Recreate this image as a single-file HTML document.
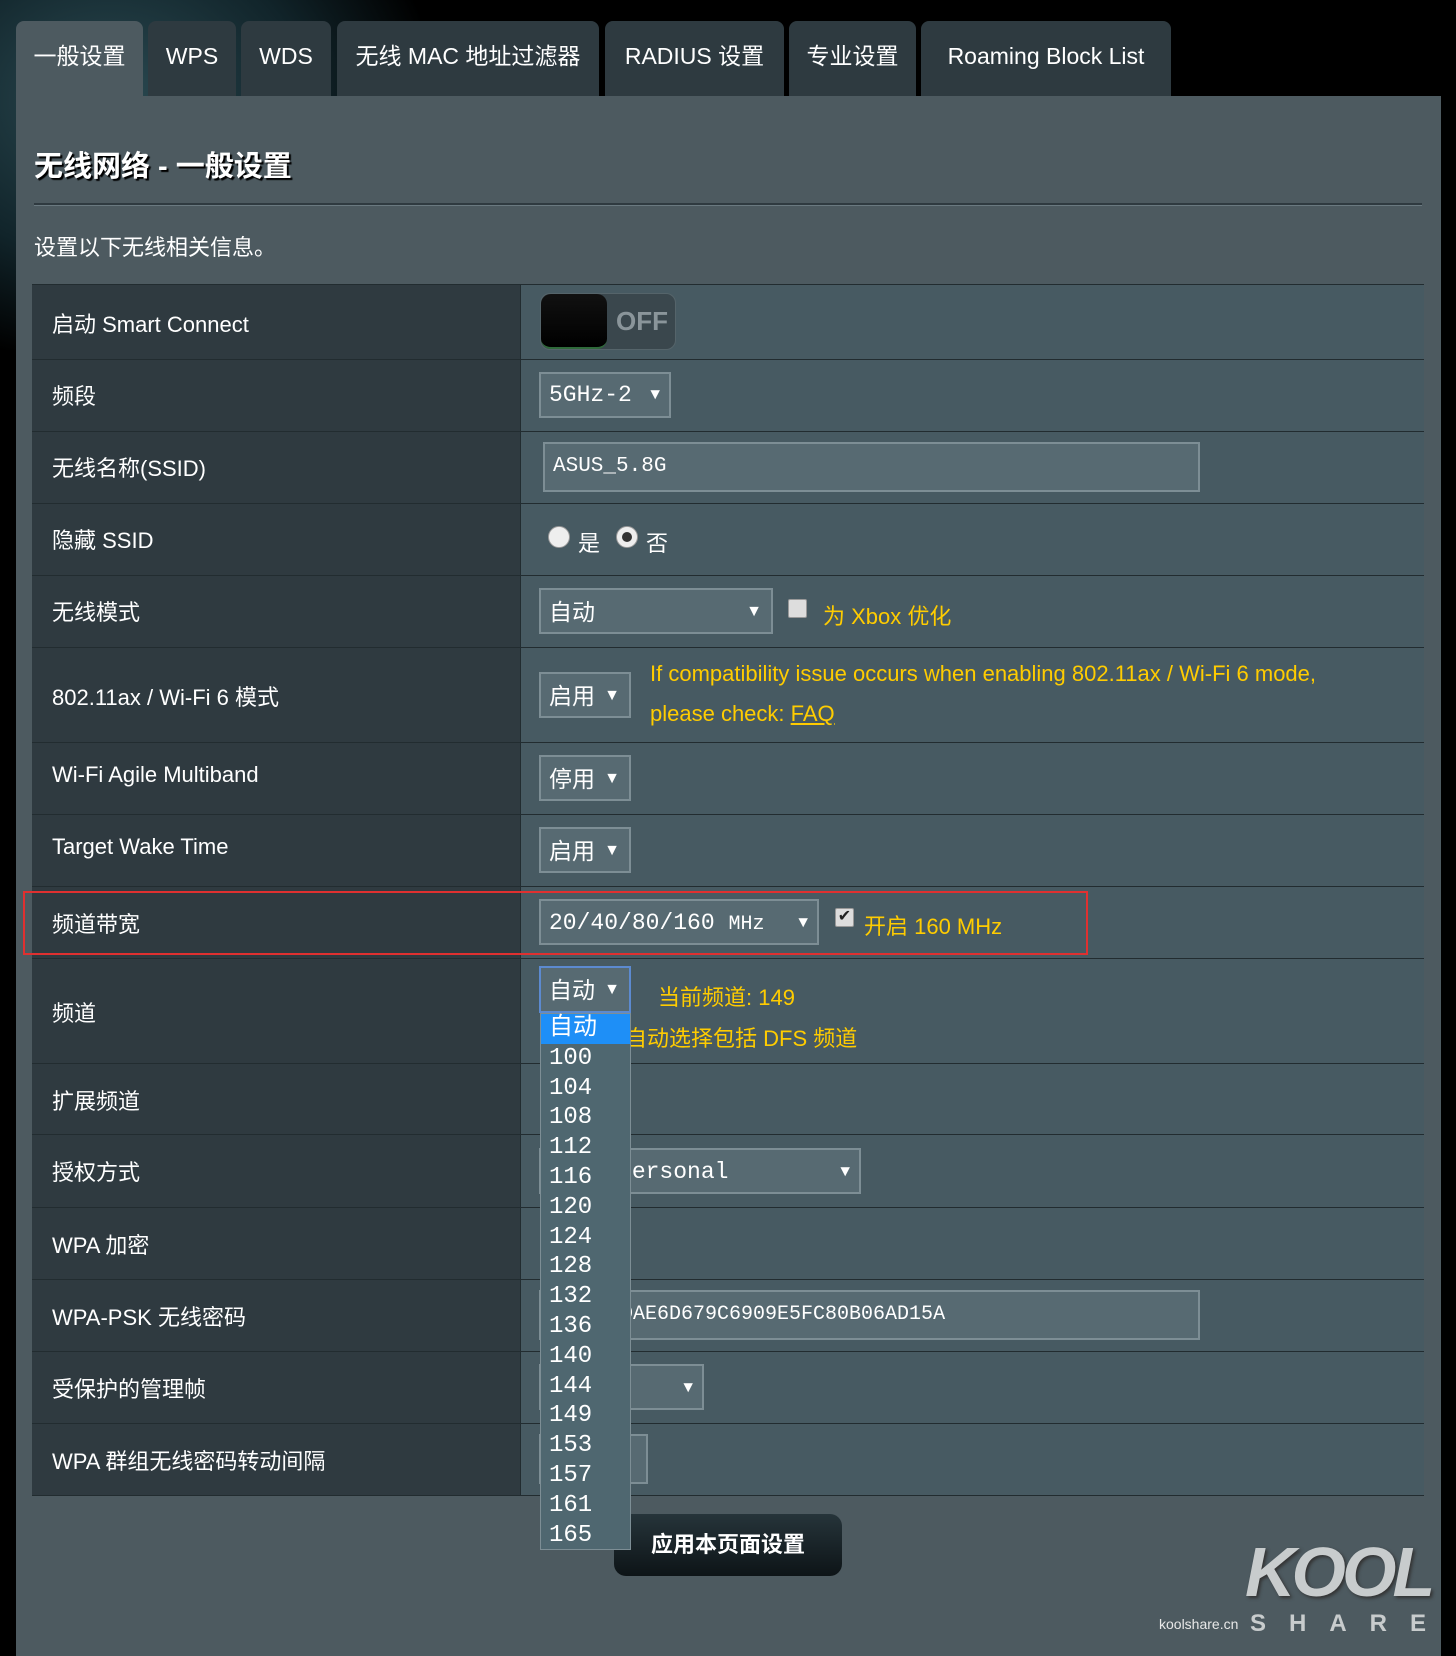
<!DOCTYPE html>
<html><head><meta charset="utf-8">
<style>
*{box-sizing:border-box;margin:0;padding:0}
body{width:1456px;height:1647px;background:#000;position:relative;overflow:hidden;font-family:"Liberation Sans","Noto Sans CJK SC",sans-serif;color:#fff}
.glow{position:absolute;left:-200px;top:-150px;width:620px;height:500px;background:radial-gradient(ellipse at center,#2b4a52 0%,#11242a 45%,#000 75%)}
.a{position:absolute}
.tab{position:absolute;top:21px;height:75px;background:#2e3a40;border-radius:8px 8px 0 0;font-size:23px;line-height:70px;text-align:center;color:#fff}
.panel{position:absolute;left:16px;top:96px;width:1425px;height:1560px;background:#4d5a60}
.row{position:absolute;left:32px;width:1392px;border-top:1px solid #222c30}
.lc{position:absolute;left:0;top:0;bottom:0;width:488px;background:#2f3a40}
.rc{position:absolute;left:488px;right:0;top:0;bottom:0;background:#475a62;border-left:1px solid #222c30}
.lbl{position:absolute;left:20px;font-size:22px;color:#fff}
.sel{position:absolute;background:#576a72;border:2px solid #7d8e95;font-family:"Liberation Mono","Noto Sans CJK SC",monospace;font-size:23px;color:#fff;padding-left:8px}
.sel .ar{position:absolute;right:9px;font-size:16px}
.y{position:absolute;color:#ffcc00;font-size:22px}
.cb{position:absolute;width:19px;height:19px;background:#ddd;border:1px solid #999;border-radius:2px}
.list{position:absolute;left:540px;top:1013px;width:91px;height:537px;background:#4f6770;border:1px solid #7d8e95;font-family:"Liberation Mono","Noto Sans CJK SC",monospace;font-size:24px;color:#fff}
.list div{height:29.8px;line-height:29.8px;padding-left:8px}
</style></head><body>
<div class="glow"></div>
<div class="tab" style="left:16px;width:127px;background:#4d5a60">一般设置</div>
<div class="tab" style="left:148px;width:88px">WPS</div>
<div class="tab" style="left:241px;width:90px">WDS</div>
<div class="tab" style="left:337px;width:262px">无线 MAC 地址过滤器</div>
<div class="tab" style="left:605px;width:179px">RADIUS 设置</div>
<div class="tab" style="left:789px;width:127px">专业设置</div>
<div class="tab" style="left:921px;width:250px">Roaming Block List</div>
<div class="panel"></div>
<div class="a" style="left:34px;top:143px;font-size:29px;font-weight:bold;text-shadow:2px 2px 1px #000">无线网络 - 一般设置</div>
<div class="a" style="left:34px;top:203px;width:1388px;height:3px;background:#2f3a40;border-bottom:1px solid #6a7980"></div>
<div class="a" style="left:34px;top:230px;font-size:22px">设置以下无线相关信息。</div>

<div class="row" style="top:284px;height:75px"><div class="lc"></div><div class="rc"></div><div class="lbl" style="top:22px">启动 Smart Connect</div></div>
<div class="row" style="top:359px;height:72px"><div class="lc"></div><div class="rc"></div><div class="lbl" style="top:19px">频段</div></div>
<div class="row" style="top:431px;height:72px"><div class="lc"></div><div class="rc"></div><div class="lbl" style="top:19px">无线名称(SSID)</div></div>
<div class="row" style="top:503px;height:72px"><div class="lc"></div><div class="rc"></div><div class="lbl" style="top:19px">隐藏 SSID</div></div>
<div class="row" style="top:575px;height:72px"><div class="lc"></div><div class="rc"></div><div class="lbl" style="top:19px">无线模式</div></div>
<div class="row" style="top:647px;height:95px"><div class="lc"></div><div class="rc"></div><div class="lbl" style="top:32px">802.11ax / Wi-Fi 6 模式</div></div>
<div class="row" style="top:742px;height:72px"><div class="lc"></div><div class="rc"></div><div class="lbl" style="top:19px">Wi-Fi Agile Multiband</div></div>
<div class="row" style="top:814px;height:72px"><div class="lc"></div><div class="rc"></div><div class="lbl" style="top:19px">Target Wake Time</div></div>
<div class="row" style="top:886px;height:72px"><div class="lc"></div><div class="rc"></div><div class="lbl" style="top:20px">频道带宽</div></div>
<div class="row" style="top:958px;height:105px"><div class="lc"></div><div class="rc"></div><div class="lbl" style="top:37px">频道</div></div>
<div class="row" style="top:1063px;height:71px"><div class="lc"></div><div class="rc"></div><div class="lbl" style="top:20px">扩展频道</div></div>
<div class="row" style="top:1134px;height:73px"><div class="lc"></div><div class="rc"></div><div class="lbl" style="top:20px">授权方式</div></div>
<div class="row" style="top:1207px;height:72px"><div class="lc"></div><div class="rc"></div><div class="lbl" style="top:20px">WPA 加密</div></div>
<div class="row" style="top:1279px;height:72px"><div class="lc"></div><div class="rc"></div><div class="lbl" style="top:20px">WPA-PSK 无线密码</div></div>
<div class="row" style="top:1351px;height:72px"><div class="lc"></div><div class="rc"></div><div class="lbl" style="top:20px">受保护的管理帧</div></div>
<div class="row" style="top:1423px;height:73px;border-bottom:1px solid #222c30"><div class="lc"></div><div class="rc"></div><div class="lbl" style="top:20px">WPA 群组无线密码转动间隔</div></div>

<!-- toggle -->
<div class="a" style="left:540px;top:293px;width:136px;height:57px;border-radius:10px;background:#3a474d;border:1px solid #55646a"></div>
<div class="a" style="left:541px;top:294px;width:66px;height:55px;border-radius:10px;background:linear-gradient(#111,#000);border-bottom:2px solid #2f6a3a"></div>
<div class="a" style="left:616px;top:306px;font-size:26px;font-weight:bold;color:#8a959a">OFF</div>

<div class="sel" style="left:539px;top:372px;width:132px;height:46px;line-height:42px">5GHz-2<span class="ar">▼</span></div>
<div class="sel" style="left:543px;top:442px;width:657px;height:50px;line-height:46px;font-size:21px">ASUS_5.8G</div>

<div class="a" style="left:548px;top:526px;width:22px;height:22px;border-radius:50%;background:#eee;border:1px solid #999"></div>
<div class="a" style="left:578px;top:526px;font-size:22px">是</div>
<div class="a" style="left:616px;top:526px;width:22px;height:22px;border-radius:50%;background:#eee;border:1px solid #999"><div style="margin:5px;width:10px;height:10px;border-radius:50%;background:#333"></div></div>
<div class="a" style="left:646px;top:526px;font-size:22px">否</div>

<div class="sel" style="left:539px;top:588px;width:234px;height:46px;line-height:44px;font-family:'Liberation Sans','Noto Sans CJK SC',sans-serif">自动<span class="ar">▼</span></div>
<div class="cb" style="left:788px;top:599px"></div>
<div class="y" style="left:823px;top:599px">为 Xbox 优化</div>

<div class="sel" style="left:539px;top:672px;width:92px;height:46px;line-height:44px;font-family:'Liberation Sans','Noto Sans CJK SC',sans-serif">启用<span class="ar">▼</span></div>
<div class="y" style="left:650px;top:661px">If compatibility issue occurs when enabling 802.11ax / Wi-Fi 6 mode,</div>
<div class="y" style="left:650px;top:701px">please check: <u>FAQ</u></div>

<div class="sel" style="left:539px;top:755px;width:92px;height:46px;line-height:44px;font-family:'Liberation Sans','Noto Sans CJK SC',sans-serif">停用<span class="ar">▼</span></div>
<div class="sel" style="left:539px;top:827px;width:92px;height:46px;line-height:44px;font-family:'Liberation Sans','Noto Sans CJK SC',sans-serif">启用<span class="ar">▼</span></div>

<div class="sel" style="left:539px;top:899px;width:280px;height:46px;line-height:44px">20/40/80/160 <span style="font-size:20px">MHz</span><span class="ar">▼</span></div>
<div class="cb" style="left:835px;top:908px;font-size:16px;line-height:16px;color:#222;text-align:center">✔</div>
<div class="y" style="left:864px;top:909px">开启 160 MHz</div>
<div class="a" style="left:23px;top:891px;width:1065px;height:64px;border:2px solid #e03030"></div>

<div class="sel" style="left:539px;top:966px;width:92px;height:47px;line-height:44px;border-color:#5c8ad0;font-family:'Liberation Sans','Noto Sans CJK SC',sans-serif">自动<span class="ar">▼</span></div>
<div class="y" style="left:658px;top:980px">当前频道: 149</div>
<div class="y" style="left:625px;top:1021px">自动选择包括 DFS 频道</div>

<div class="sel" style="left:539px;top:1148px;width:322px;height:46px;line-height:44px">WPA2-Personal<span class="ar">▼</span></div>
<div class="sel" style="left:539px;top:1290px;width:661px;height:50px;line-height:46px;font-size:20px">C8A1B0DAE6D679C6909E5FC80B06AD15A</div>
<div class="sel" style="left:539px;top:1364px;width:165px;height:46px;line-height:44px"><span class="ar">▼</span></div>
<div class="sel" style="left:539px;top:1434px;width:109px;height:50px"></div>

<div class="a" style="left:614px;top:1514px;width:228px;height:62px;border-radius:12px;background:linear-gradient(#26343a,#0d1417);font-size:22px;font-weight:bold;text-align:center;line-height:62px">应用本页面设置</div>

<div class="list">
<div style="background:#1e8ff7">自动</div><div>100</div><div>104</div><div>108</div><div>112</div><div>116</div><div>120</div><div>124</div><div>128</div><div>132</div><div>136</div><div>140</div><div>144</div><div>149</div><div>153</div><div>157</div><div>161</div><div>165</div>
</div>

<div class="a" style="left:1245px;top:1532px;font-size:70px;font-weight:bold;color:#c8cccd;letter-spacing:-4px;font-style:italic;text-shadow:2px 2px 3px #333">KOOL</div>
<div class="a" style="left:1250px;top:1610px;font-size:24px;font-weight:bold;color:#c8cccd;letter-spacing:23px">SHARE</div>
<div class="a" style="left:1159px;top:1616px;font-size:14px;color:#e8e8e8">koolshare.cn</div>
</body></html>
